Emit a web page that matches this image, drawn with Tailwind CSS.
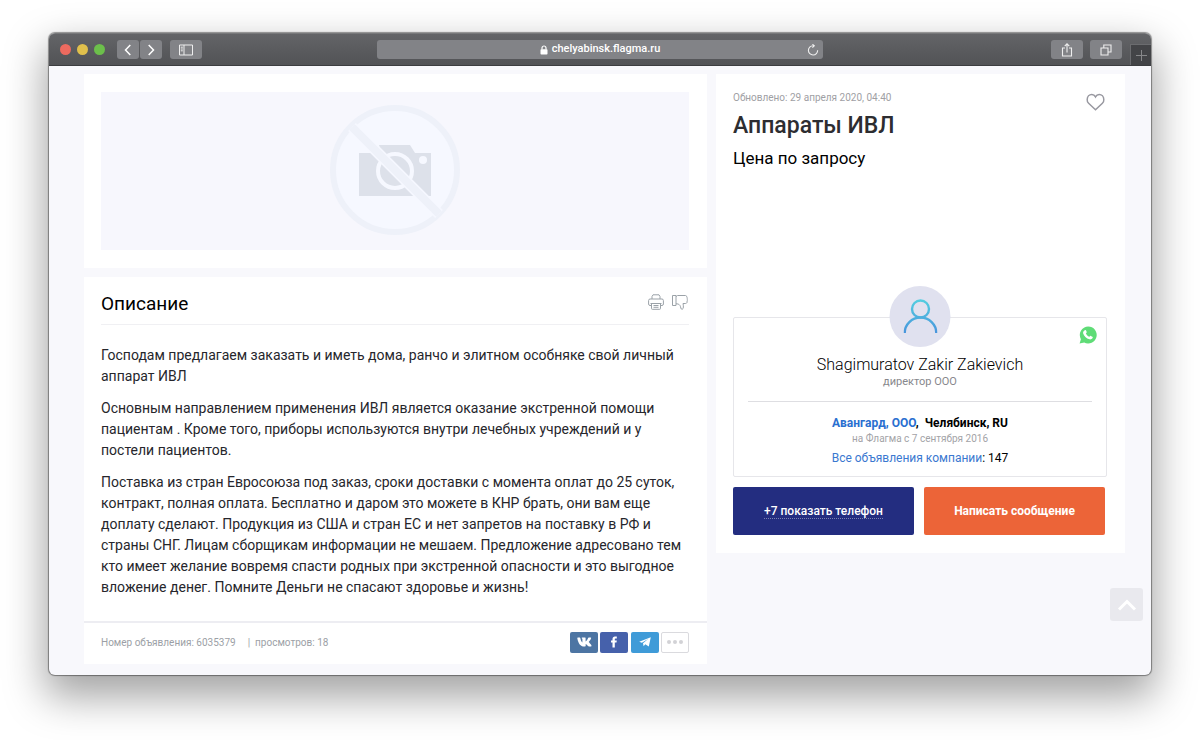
<!DOCTYPE html>
<html lang="ru">
<head>
  <meta charset="UTF-8" />
  <title>Аппараты ИВЛ - Flagma</title>
  <meta name="viewport" content="width=device-width, initial-scale=1.0" />
  <script src="https://cdn.jsdelivr.net/npm/@tailwindcss/browser@4"></script>
</head>
<body class="bg-white min-h-screen px-[49px] pt-[33px] pb-16 font-['Roboto','Noto_Sans',sans-serif] text-black">
  <div class="relative rounded-md bg-[#f8f8fc] shadow-[0_0_1px_1px_rgba(0,0,0,0.4),0_18px_40px_4px_rgba(0,0,0,0.36)]">

    <!-- Browser toolbar -->
    <header class="grid grid-cols-[1fr_minmax(0,446px)_1fr] items-center h-[33px] rounded-t-md bg-linear-to-b from-[#636467] to-[#525356] border-t border-t-[#77787a] border-b border-b-[#3c3d40]">
      <div class="flex items-center pl-[11px]">
        <div class="flex gap-[6px]">
          <span class="size-[11px] rounded-full bg-[#ec6a5f]"></span>
          <span class="size-[11px] rounded-full bg-[#e0c04c]"></span>
          <span class="size-[11px] rounded-full bg-[#6cbf4b]"></span>
        </div>
        <div class="flex gap-px ml-3">
          <button aria-label="Назад" class="flex items-center justify-center w-[22px] h-[19px] rounded-[3px] bg-[#828387]">
            <svg class="size-3" viewBox="0 0 12 12" fill="none" stroke="#fff" stroke-width="1.5"><path d="M8.3 1 3.5 6l4.8 5"/></svg>
          </button>
          <button aria-label="Вперёд" class="flex items-center justify-center w-[22px] h-[19px] rounded-[3px] bg-[#828387]">
            <svg class="size-3" viewBox="0 0 12 12" fill="none" stroke="#fff" stroke-width="1.5"><path d="M3.7 1 8.5 6l-4.8 5"/></svg>
          </button>
        </div>
        <button aria-label="Боковая панель" class="flex items-center justify-center w-8 h-[19px] ml-2 rounded-[3px] bg-[#828387]">
          <svg class="w-[14px] h-3" viewBox="0 0 14 12" fill="none" stroke="#eee" stroke-width="1"><path d="M.5 1h13v10H.5zM5 1v10M1.8 3.2h2M1.8 5h2M1.8 6.8h2"/></svg>
        </button>
      </div>

      <div class="relative flex items-center justify-center gap-1 h-[19px] rounded-[3px] bg-[#828387] text-white text-[11px] font-medium">
        <svg class="w-2 h-[10px]" viewBox="0 0 8 10"><path d="M2 4.5V3a2 2 0 0 1 4 0v1.5" fill="none" stroke="#fff" stroke-width="1.2"/><rect x=".5" y="4.200" width="7" height="5.300" rx=".8" fill="#fff"/></svg>
        <span>chelyabinsk.flagma.ru</span>
        <button aria-label="Обновить" class="absolute right-1 top-1">
          <svg class="size-3" viewBox="0 0 12 12" fill="none" stroke="#eee" stroke-width="1.1"><path d="M10.600 6.200A4.600 4.600 0 1 1 6 1.800h1.200M5.400.2 7.300 1.800 5.400 3.700"/></svg>
        </button>
      </div>

      <div class="flex justify-end items-center h-full">
        <button aria-label="Поделиться" class="flex items-center justify-center w-8 h-[19px] mr-[7px] rounded-[3px] bg-[#828387]">
          <svg class="w-3 h-[14px]" viewBox="0 0 12 14" fill="none" stroke="#eee" stroke-width="1.1"><path d="M4 5H1.500v8h9V5H8M6 9.500V1M3.700 3.200 6 .9l2.300 2.300"/></svg>
        </button>
        <button aria-label="Вкладки" class="flex items-center justify-center w-8 h-[19px] mr-2 rounded-[3px] bg-[#828387]">
          <svg class="size-3" viewBox="0 0 12 12" fill="none" stroke="#eee" stroke-width="1.1"><path d="M1 4h7v7H1zM3.800 4V1h7.200v7H8"/></svg>
        </button>
        <button aria-label="Новая вкладка" class="flex items-center justify-center self-end w-[21px] h-[21px] bg-[#434447] border-l border-t border-[#6b6c6f]">
          <svg class="size-[11px]" viewBox="0 0 11 11" stroke="#87888a" stroke-width="1"><path d="M5.500 0v11M0 5.500h11"/></svg>
        </button>
      </div>
    </header>

    <main class="grid grid-cols-[623fr_409fr] items-start gap-[9px] pt-2 pl-[35px] pr-[26px] pb-[11px]">
      <div class="flex flex-col gap-[9px]">

        <!-- Photo placeholder -->
        <section class="bg-white py-[18px] pl-[17px] pr-[18px]">
          <div class="flex items-center justify-center h-[158px] bg-[#f7f7fd]">
            <svg class="size-[132px]" viewBox="0 0 132 132">
              <circle cx="66" cy="65" r="62" fill="#f6f8ff" stroke="#eef1f9" stroke-width="6"/>
              <path d="M30 48h22l-2-8h31l5 8h16v43H30z" fill="#dde1ea"/>
              <circle cx="66" cy="66" r="17" fill="#dde1ea" stroke="#f6f8ff" stroke-width="4"/>
              <circle cx="94" cy="55" r="4" fill="#f6f8ff"/>
              <path d="m23 22 87 87" stroke="#f6f8ff" stroke-width="11"/>
              <path d="m23 22 87 87" stroke="#eef1f9" stroke-width="8"/>
            </svg>
          </div>
        </section>

        <!-- Description -->
        <section class="bg-white">
          <div class="pl-[17px] pr-[18px] pb-[23px]">
            <div class="flex items-start justify-between h-12 border-b border-[#f0f0f3]">
              <h2 class="pt-[14px] text-[19px] leading-[26px]">Описание</h2>
              <div class="flex gap-2 pt-[17px] pr-px">
                <button aria-label="Печать">
                  <svg class="size-4" viewBox="0 0 16 16" fill="none" stroke="#9ba2a8" stroke-width="1"><path d="M4 5V2.500L5 .8h6l1 1.700V5M3.500 11.500H2A1.500 1.500 0 0 1 .6 10V6.500A1.500 1.500 0 0 1 2 5h12a1.500 1.500 0 0 1 1.400 1.500V10a1.500 1.500 0 0 1-1.400 1.500h-1.500M2.500 9.500h11M3.500 9.500v5a.8.8 0 0 0 .8.800h7.400a.8.8 0 0 0 .8-.8v-5M5.500 11.500h5M5.500 13.300h5"/></svg>
                </button>
                <button aria-label="Пожаловаться">
                  <svg class="size-4" viewBox="0 0 16 16" fill="none" stroke="#9ba2a8" stroke-width="1"><path d="M.5 1.500H4v10H.5zM4 2.500 5.500 1.500h8c1 0 1.300.8 1.100 1.500.8.500.8 1.500.4 2 .6.700.5 1.500 0 2 .4 1.300-.2 2.500-1.500 2.500H11c.5 2 .8 5.500-.8 5.800C8.500 15.500 9 13 8 11.500 7 10 5.500 9.800 4 9.800"/></svg>
                </button>
              </div>
            </div>
            <div class="flex flex-col gap-[11px] pt-5 text-sm leading-[21px] text-[#26262c]">
              <p>Господам предлагаем заказать и иметь дома, ранчо и элитном особняке свой личный аппарат ИВЛ</p>
              <p>Основным направлением применения ИВЛ является оказание экстренной помощи пациентам . Кроме того, приборы используются внутри лечебных учреждений и у постели пациентов.</p>
              <p>Поставка из стран Евросоюза под заказ, сроки доставки с момента оплат до 25 суток, контракт, полная оплата. Бесплатно и даром это можете в КНР брать, они вам еще доплату сделают. Продукция из США и стран ЕС и нет запретов на поставку в РФ и страны СНГ. Лицам сборщикам информации не мешаем. Предложение адресовано тем кто имеет желание вовремя спасти родных при экстренной опасности и это выгодное вложение денег. Помните Деньги не спасают здоровье и жизнь!</p>
            </div>
          </div>
          <footer class="flex items-center justify-between h-[43px] pl-[17px] pr-[18px] pb-[3px] border-t-2 border-[#ededf2] text-[#9c9fa6]">
            <div class="flex gap-3 text-[10px]">
              <span>Номер объявления: 6035379</span>
              <span>|&nbsp; просмотров: 18</span>
            </div>
            <div class="flex gap-[2px]">
              <button aria-label="VK" class="flex items-center justify-center w-7 h-[21px] rounded-xs bg-[#4d75a3]">
                <svg class="w-[15px] h-[10px]" viewBox="0 0 15 10" fill="#fff"><path d="M8 9.500h-.8C3.500 9.500 1.300 6.500.3 1.200q-.1-.7.6-.7h1.800q.5 0 .6.600C3.700 3.400 4.500 5 5.400 5.500V2.300C5.300 1.400 4.900 1.400 4.600 1c0-.3.300-.5.600-.5h2.900q.5 0 .5.600v3.300c.8-.2 1.900-1.700 2.500-3.300q.2-.6.700-.6h1.800q.8 0 .5.800c-.5 1.500-1.900 3.100-2.400 3.700.5.700 2 1.900 2.700 3.300q.5 1.200-.6 1.200h-1.900q-.5 0-.8-.4C10.400 8.400 9.500 7.300 8.700 7v1.700q0 .8-.7.8z"/></svg>
              </button>
              <button aria-label="Facebook" class="flex items-center justify-center w-7 h-[21px] rounded-xs bg-[#4661ab]">
                <svg class="w-[6px] h-3" viewBox="0 0 6 12" fill="#fff"><path d="M1.500 11.500V6.500H0v-2h1.500V3.300C1.500 1.400 2.500.5 4 .5h1.800v2H4.700c-.7 0-.9.300-.9.900v1.100h2l-.3 2H3.800v5z"/></svg>
              </button>
              <button aria-label="Telegram" class="flex items-center justify-center w-7 h-[21px] ml-px rounded-xs bg-[#3f9bd8]">
                <svg class="w-3 h-[10px]" viewBox="0 0 12 10" fill="#fff"><path d="M11.800.2 9.800 9.600 6.300 7.200 4.600 9.300 4 6.300l5.400-4.600-6.500 4L.2 4.700z"/></svg>
              </button>
              <button aria-label="Ещё" class="flex items-center justify-center gap-[2px] w-7 h-[21px] rounded-xs bg-white border border-[#dadade]">
                <span class="size-1 rounded-full bg-[#d2d2d6]"></span>
                <span class="size-1 rounded-full bg-[#d2d2d6]"></span>
                <span class="size-1 rounded-full bg-[#d2d2d6]"></span>
              </button>
            </div>
          </footer>
        </section>
      </div>

      <!-- Offer and seller -->
      <aside class="bg-white pl-[17px] pr-[18px] pt-4 pb-[18px]">
        <div class="flex items-start justify-between min-h-[196px]">
          <div>
            <p class="text-[10px] leading-4 text-[#a0a0a4]">Обновлено: 29 апреля 2020, 04:40</p>
            <h1 class="pt-1 text-[23px] leading-8 font-medium text-[#2d2d31]">Аппараты ИВЛ</h1>
            <p class="pt-1 text-[17px] leading-6">Цена по запросу</p>
          </div>
          <button aria-label="В избранное" class="mr-[2px] mt-[3px]">
            <svg class="w-[19px] h-[18px]" viewBox="0 0 19 18" fill="none" stroke="#9898a0" stroke-width="1.5"><path d="M9.500 16.800 2.600 10.300A4.700 4.700 0 0 1 1.200 6.600C1.200 3.500 3.400 1.400 5.800 1.400c1.700 0 2.900.9 3.700 2.500.8-1.600 2-2.500 3.700-2.500 2.400 0 4.600 2.100 4.600 5.200a4.700 4.700 0 0 1-1.400 3.700z"/></svg>
          </button>
        </div>

        <div class="relative mt-[31px] px-[14px] pt-9 pb-[9px] border border-[#e6e6ea] rounded-xs text-center">
          <div class="absolute left-1/2 -top-8 -translate-x-1/2 flex items-center justify-center size-[61px] rounded-full bg-[#e0e1ef]">
            <svg class="w-[34px] h-[35px]" viewBox="0 0 34 35" fill="none" stroke="url(#person)" stroke-width="2.4">
              <defs><linearGradient id="person" gradientUnits="userSpaceOnUse" x1="0" y1="0" x2="0" y2="35"><stop stop-color="#54cfe0"/><stop offset="1" stop-color="#4793dc"/></linearGradient></defs>
              <circle cx="17" cy="10" r="8.5"/>
              <path d="M1.200 34a15.800 15.500 0 0 1 31.600 0"/>
            </svg>
          </div>
          <a href="#" aria-label="WhatsApp" class="absolute right-[9px] top-2">
            <svg class="size-[18px]" viewBox="0 0 18 18"><path d="M9.200.5a8.500 8.500 0 1 1-4 16L.6 17.600l1.300-4.400A8.500 8.500 0 0 1 9.200.5z" fill="#5fdc77"/><path d="M5.800 4.200c.7-.4 1.200 0 1.400.6l.5 1.300c.2.600-.6 1-.8 1.500.7 1.500 1.900 2.600 3.400 3.200.5-.3.900-1.200 1.500-.9l1.600.8c.5.300.4 1 0 1.600-.6.900-1.800 1.300-2.900 1-3.200-.8-5.600-3.100-6.400-6-.2-1.300.6-2.500 1.700-3.100z" fill="#fff"/></svg>
          </a>
          <p class="text-base leading-[22px] font-light">Shagimuratov Zakir Zakievich</p>
          <p class="text-[11px] leading-3 text-[#87878c]">директор ООО</p>
          <hr class="mt-[13px] border-[#dedee2]" />
          <p class="pt-3 text-xs leading-[18px] font-bold"><a href="#" class="text-[#2a6fd0]">Авангард, ООО</a>,&nbsp; Челябинск, RU</p>
          <p class="text-[10px] leading-[14px] text-[#a3a3a7]">на Флагма с 7 сентября 2016</p>
          <p class="pt-[3px] text-xs leading-[18px]"><a href="#" class="text-[#3a78d0]">Все объявления компании</a>: 147</p>
        </div>

        <div class="grid grid-cols-2 gap-[10px] pt-[10px] pr-[2px] text-xs font-medium text-white">
          <button class="h-12 rounded-xs bg-[#232d80]"><span class="border-b border-dotted border-white/40">+7 показать телефон</span></button>
          <button class="h-12 rounded-xs bg-[#ec6438] font-bold">Написать сообщение</button>
        </div>
      </aside>
    </main>

    <button aria-label="Наверх" class="absolute right-2 bottom-[54px] flex items-center justify-center size-[33px] rounded-[3px] bg-[#e9e9ee]">
      <svg class="w-5 h-3" viewBox="0 0 20 12" fill="none" stroke="#fff" stroke-width="3"><path d="m2 10.500 8-8 8 8"/></svg>
    </button>
  </div>
</body>
</html>
